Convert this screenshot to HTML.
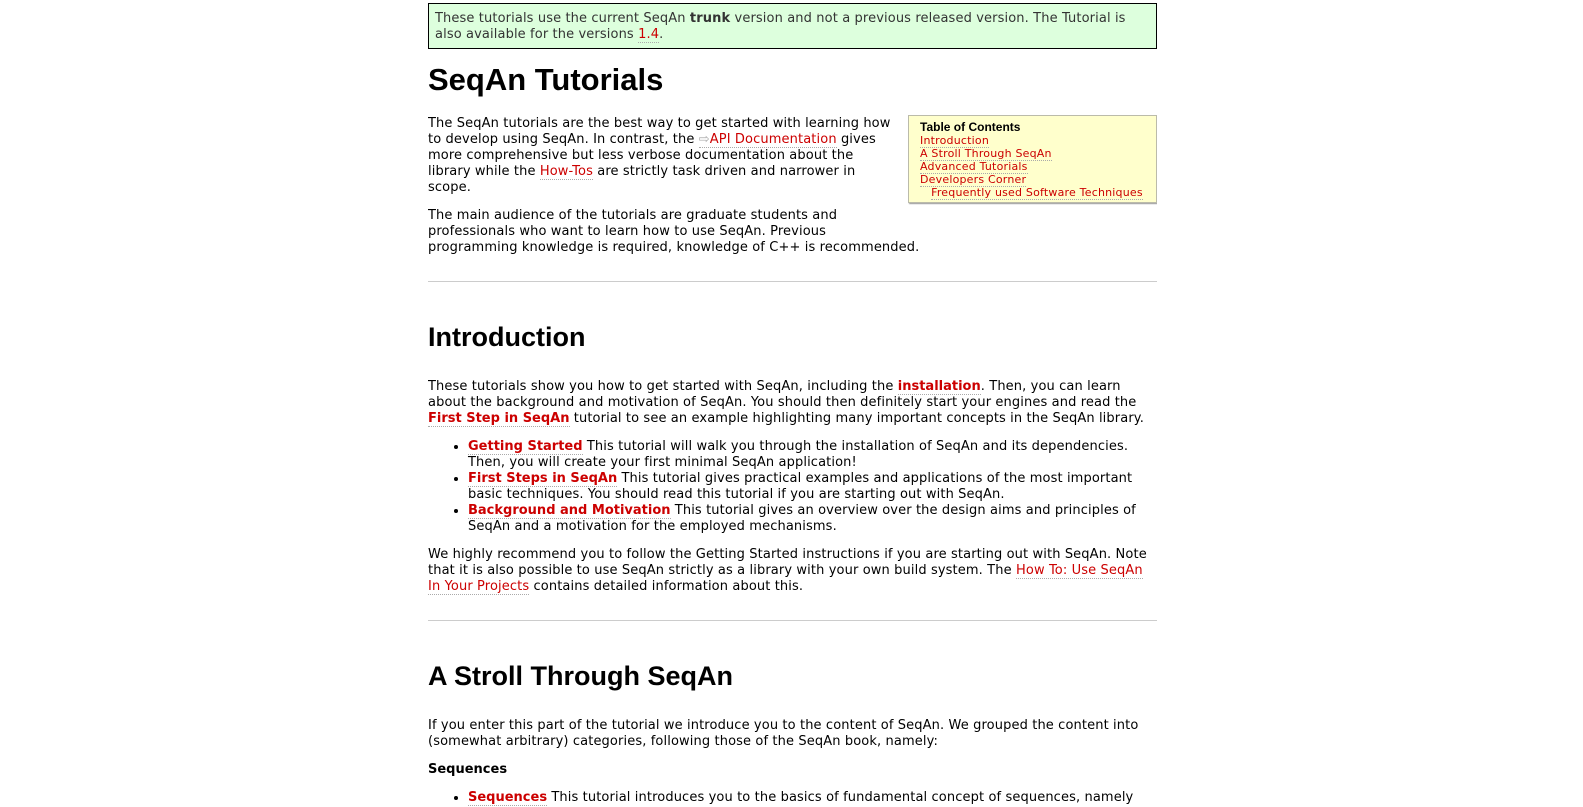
<!DOCTYPE html>
<html><head><meta charset="utf-8"><style>
html,body{overflow:hidden;height:807px;margin:0;}
body{background:#fff;font-family:"DejaVu Sans","Liberation Sans",sans-serif;font-size:13px;letter-spacing:0.12px;line-height:16px;color:#000;}
#c{position:absolute;left:428px;top:0;width:729px;height:807px;overflow:hidden;}
a{color:#c00;text-decoration:none;border-bottom:1px dotted #aaa;}
a.b{font-weight:bold;font-size:13px;letter-spacing:0}
.note{margin-top:3px;border:1px solid #000;background:#dfd;padding:7px 6px 5px 6px;color:#333;}
h1{font-family:"Liberation Sans",sans-serif;font-size:31px;letter-spacing:0;font-weight:bold;margin:14px 0 19px 0;line-height:34px;}
h2{font-family:"Liberation Sans",sans-serif;font-size:27px;letter-spacing:0;font-weight:bold;margin:40px 0 27px 0;line-height:30px;}
p{margin:0 0 12px 0;}
hr{border:0;border-top:1px solid #ccc;margin:25px 0 0 0;}
.toc{position:absolute;left:480px;top:115px;width:236px;background:#ffc;border:1px solid #bba;box-shadow:1px 1px 1px #999;padding:5px 0 3px 11px;font-size:11px;letter-spacing:0.2px;line-height:13px;}
.toc b{font-family:"Liberation Sans",sans-serif;font-size:12px;letter-spacing:0}
ul{margin:0 0 12px 0;padding-left:40px;}
h4{margin:0 0 12px 0;font-size:13px;letter-spacing:0}
</style></head><body><div id="c">
<div class="note">These tutorials use the current SeqAn <b>trunk</b> version and not a previous released version. The Tutorial is also available for the versions <a>1.4</a>.</div>
<h1>SeqAn Tutorials</h1>
<div class="toc"><b>Table of Contents</b><br><a>Introduction</a><br><a>A Stroll Through SeqAn</a><br><a>Advanced Tutorials</a><br><a>Developers Corner</a><br>&nbsp;&nbsp;&nbsp;<a>Frequently used Software Techniques</a></div>
<div style="width:468px">
<p>The SeqAn tutorials are the best way to get started with learning how to develop using SeqAn. In contrast, the <a><span style="color:#aaa">⇨</span>API Documentation</a> gives more comprehensive but less verbose documentation about the library while the <a>How-Tos</a> are strictly task driven and narrower in scope.</p>
</div>
<div style="width:540px;white-space:nowrap">
<p>The main audience of the tutorials are graduate students and<br>professionals who want to learn how to use SeqAn. Previous<br>programming knowledge is required, knowledge of C++ is recommended.</p>
</div>
<hr>
<h2>Introduction</h2>
<p>These tutorials show you how to get started with SeqAn, including the <a class="b">installation</a>. Then, you can learn about the background and motivation of SeqAn. You should then definitely start your engines and read the <a class="b">First Step in SeqAn</a> tutorial to see an example highlighting many important concepts in the SeqAn library.</p>
<ul><li><a class="b">Getting Started</a> This tutorial will walk you through the installation of SeqAn and its dependencies. Then, you will create your first minimal SeqAn application!</li>
<li><a class="b">First Steps in SeqAn</a> This tutorial gives practical examples and applications of the most important basic techniques. You should read this tutorial if you are starting out with SeqAn.</li>
<li><a class="b">Background and Motivation</a> This tutorial gives an overview over the design aims and principles of SeqAn and a motivation for the employed mechanisms.</li></ul>
<p>We highly recommend you to follow the Getting Started instructions if you are starting out with SeqAn. Note that it is also possible to use SeqAn strictly as a library with your own build system. The <a>How To: Use SeqAn In Your Projects</a> contains detailed information about this.</p>
<hr>
<h2>A Stroll Through SeqAn</h2>
<p>If you enter this part of the tutorial we introduce you to the content of SeqAn. We grouped the content into (somewhat arbitrary) categories, following those of the SeqAn book, namely:</p>
<h4>Sequences</h4>
<ul><li><a class="b">Sequences</a> This tutorial introduces you to the basics of fundamental concept of sequences, namely Strings and Segments.</li></ul>
</div></body></html>
